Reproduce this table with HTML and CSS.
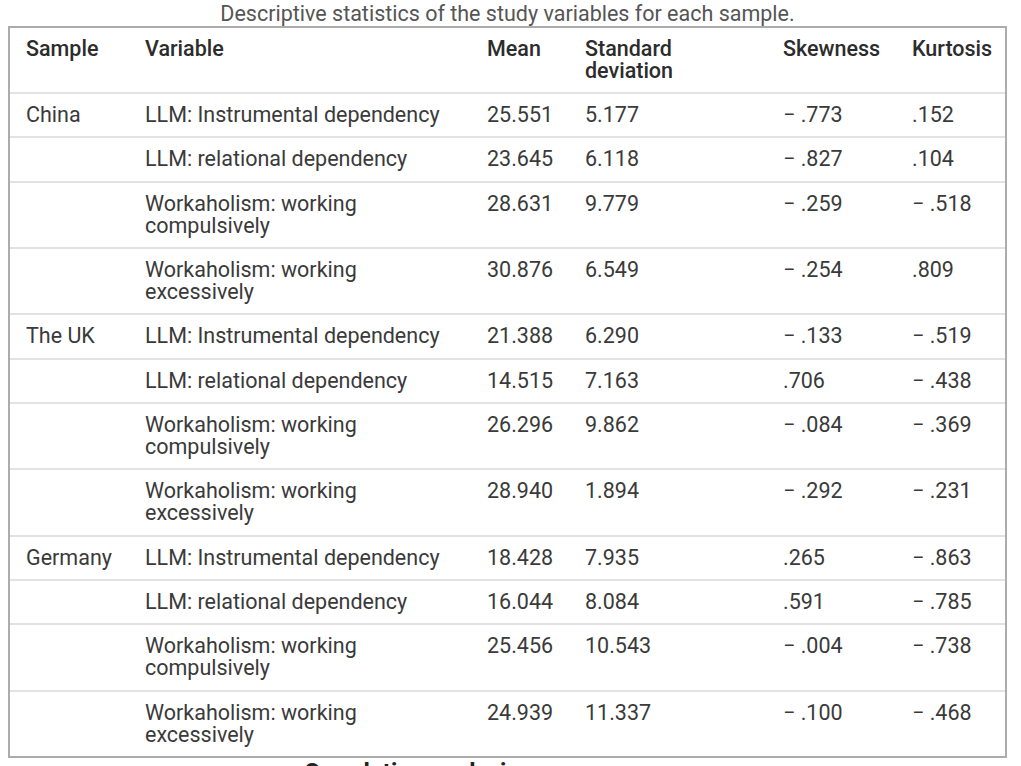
FILE: index.html
```html
<!DOCTYPE html>
<html lang="en">
<head>
  <meta charset="UTF-8" />
  <title>Descriptive statistics</title>
  <link rel="stylesheet" href="styles.css">
</head>
<body>

  <table class="stats">
    <caption>Descriptive statistics of the study variables for each sample.</caption>
    <colgroup>
      <col class="c-sample">
      <col class="c-var">
      <col class="c-mean">
      <col class="c-sd">
      <col class="c-skew">
      <col class="c-kurt">
    </colgroup>
    <thead>
      <tr>
        <th>Sample</th>
        <th>Variable</th>
        <th>Mean</th>
        <th>Standard deviation</th>
        <th>Skewness</th>
        <th>Kurtosis</th>
      </tr>
    </thead>
    <tbody>
      <tr>
        <td>China</td>
        <td>LLM: Instrumental dependency</td>
        <td>25.551</td><td>5.177</td><td>&minus; .773</td><td>.152</td>
      </tr>
      <tr>
        <td></td>
        <td>LLM: relational dependency</td>
        <td>23.645</td><td>6.118</td><td>&minus; .827</td><td>.104</td>
      </tr>
      <tr>
        <td></td>
        <td>Workaholism: working compulsively</td>
        <td>28.631</td><td>9.779</td><td>&minus; .259</td><td>&minus; .518</td>
      </tr>
      <tr>
        <td></td>
        <td>Workaholism: working excessively</td>
        <td>30.876</td><td>6.549</td><td>&minus; .254</td><td>.809</td>
      </tr>
      <tr>
        <td>The UK</td>
        <td>LLM: Instrumental dependency</td>
        <td>21.388</td><td>6.290</td><td>&minus; .133</td><td>&minus; .519</td>
      </tr>
      <tr>
        <td></td>
        <td>LLM: relational dependency</td>
        <td>14.515</td><td>7.163</td><td>.706</td><td>&minus; .438</td>
      </tr>
      <tr>
        <td></td>
        <td>Workaholism: working compulsively</td>
        <td>26.296</td><td>9.862</td><td>&minus; .084</td><td>&minus; .369</td>
      </tr>
      <tr>
        <td></td>
        <td>Workaholism: working excessively</td>
        <td>28.940</td><td>1.894</td><td>&minus; .292</td><td>&minus; .231</td>
      </tr>
      <tr>
        <td>Germany</td>
        <td>LLM: Instrumental dependency</td>
        <td>18.428</td><td>7.935</td><td>.265</td><td>&minus; .863</td>
      </tr>
      <tr>
        <td></td>
        <td>LLM: relational dependency</td>
        <td>16.044</td><td>8.084</td><td>.591</td><td>&minus; .785</td>
      </tr>
      <tr>
        <td></td>
        <td>Workaholism: working compulsively</td>
        <td>25.456</td><td>10.543</td><td>&minus; .004</td><td>&minus; .738</td>
      </tr>
      <tr>
        <td></td>
        <td>Workaholism: working excessively</td>
        <td>24.939</td><td>11.337</td><td>&minus; .100</td><td>&minus; .468</td>
      </tr>
    </tbody>
  </table>

  <h2 class="next-title">Correlation analysis</h2>

</body>
</html>
```

FILE: styles.css
```css
body {
  margin: 2px 8px 0;
  font-family: Roboto, "Liberation Sans", sans-serif;
  color: #3a3a3a;
  background: #fff;
}

.stats {
  width: 999px;
  table-layout: fixed;
  border-collapse: separate;
  border-spacing: 0;
  border: 2px solid #acacac;
  font-size: 21.5px;
  line-height: 22px;
}
.stats caption {
  font-size: 21.5px;
  line-height: 24px;
  color: #555;
}
.c-sample { width: 119px; }
.c-var { width: 342px; }
.c-mean { width: 98px; }
.c-sd { width: 198px; }
.c-skew { width: 129px; }
.c-kurt { width: 109px; }

.stats th,
.stats td {
  padding: 10px 16px 10.35px;
  text-align: left;
  vertical-align: top;
  border-bottom: 2px solid #e2e2e2;
}
.stats th {
  font-weight: 500;
  color: #2c2c2c;
  padding-bottom: 10px;
}
.stats tbody tr:last-child td {
  border-bottom: none;
}

/* titre suivant, coupé en bas */
.next-title {
  margin: 4px 0 0;
  padding-left: 296px;
  font-size: 24px;
  line-height: 20px;
  color: #222;
}
```
